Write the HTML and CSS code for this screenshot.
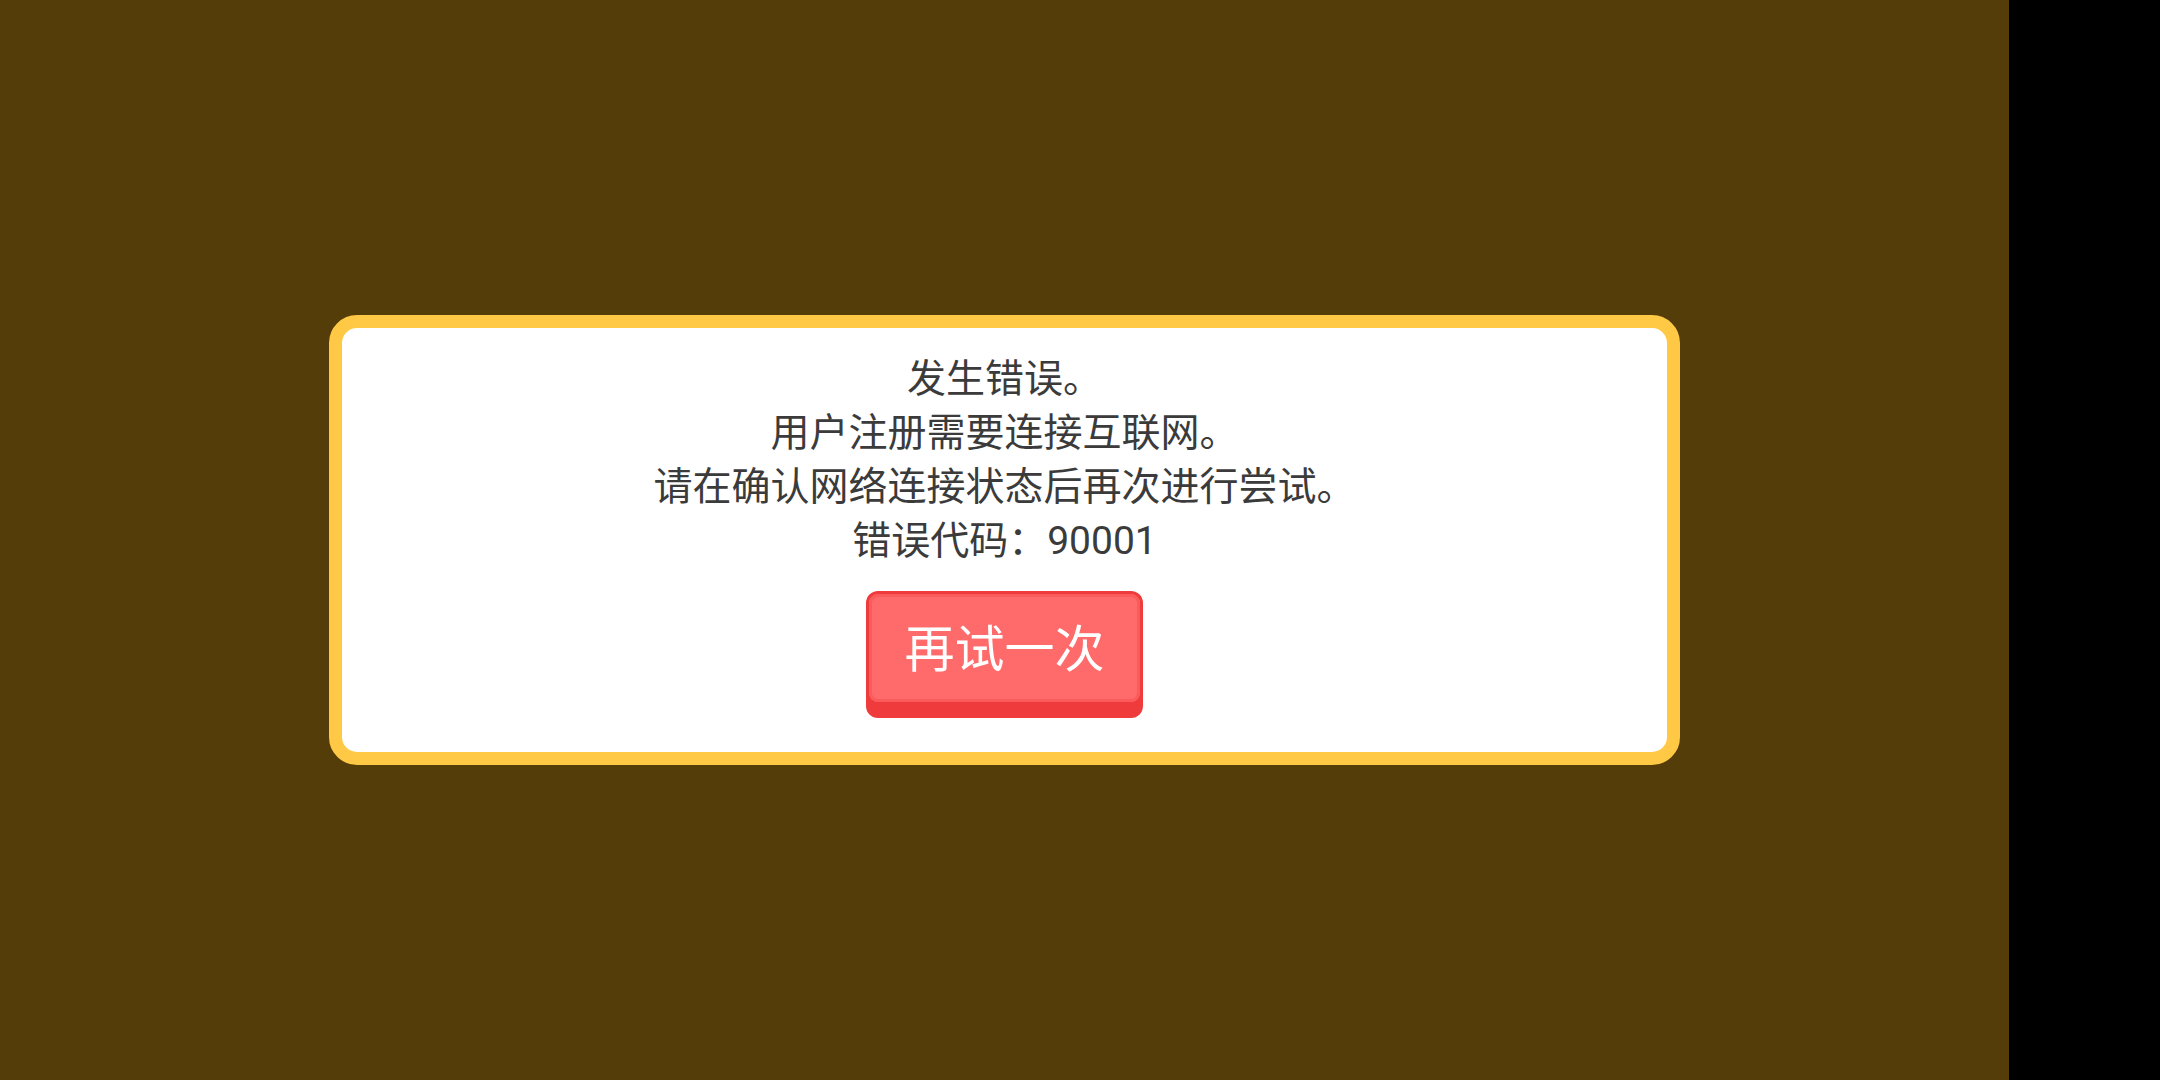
FILE: index.html
```html
<!DOCTYPE html>
<html lang="zh">
<head>
    <meta charset="UTF-8">
    <meta name="viewport" content="width=device-width, initial-scale=1.0">
    <title>发生错误</title>
    <link rel="stylesheet" href="styles.css">
</head>
<body>
    <div class="screen">
        <!-- 错误弹窗 -->
        <div class="dialog">
            <div class="message">
                <p>发生错误。</p>
                <p>用户注册需要连接互联网。</p>
                <p>请在确认网络连接状态后再次进行尝试。</p>
                <p>错误代码：90001</p>
            </div>
            <button class="retry-btn"><span class="retry-face">再试一次</span></button>
        </div>
    </div>
    <!-- 右侧黑边 -->
    <div class="side-bar"></div>
</body>
</html>
```

FILE: styles.css
```css
html, body {
    height: 100%;
}
body {
    margin: 0;
    display: flex;
    background-color: #000;
    font-family: Roboto, "Noto Sans CJK SC", sans-serif;
}
.screen {
    flex: 1;
    display: flex;
    align-items: center;
    justify-content: center;
    background-color: #543d09;
}
.side-bar {
    width: 151px;
    background-color: #000;
}
.dialog {
    box-sizing: border-box;
    width: 1351px;
    height: 450px;
    padding: 24px 0 0;
    border: 13.5px solid #ffc845;
    border-radius: 28px;
    background: #fff;
    display: flex;
    flex-direction: column;
    align-items: center;
}
.message {
    text-align: center;
    color: #3b3b3b;
    font-size: 39px;
    line-height: 54px;
}
.message p {
    margin: 0;
}
.retry-btn {
    margin-top: 23px;
    width: 277px;
    height: 127px;
    padding: 3px 3px 16px;
    border: none;
    border-radius: 12px;
    background-color: #ef3b3b;
    cursor: pointer;
    font-family: inherit;
    display: flex;
}
.retry-face {
    flex: 1;
    display: flex;
    align-items: center;
    justify-content: center;
    padding-bottom: 6px;
    border-radius: 9px;
    background-color: #ff6b6b;
    box-shadow: inset 0 0 0 3px #fb5b5b;
    color: #fff;
    font-size: 50px;
}
```
